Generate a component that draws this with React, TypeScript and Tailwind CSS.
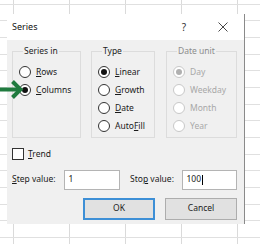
const font = { fontFamily: '"Segoe UI", "Noto Sans", "Open Sans", sans-serif' };

function Radio({ label, u, checked, disabled }: { label: string; u?: number; checked?: boolean; disabled?: boolean }) {
  const text =
    u === undefined ? (
      label
    ) : (
      <>
        {label.slice(0, u)}
        <span className="underline underline-offset-1">{label[u]}</span>
        {label.slice(u + 1)}
      </>
    );
  return (
    <div className="flex h-[18px] items-center gap-[5px]">
      <span
        className={
          "flex h-[12px] w-[12px] items-center justify-center rounded-full border bg-white " +
          (disabled ? "border-[#c8c8c8]" : "border-[#333333]")
        }
      >
        {checked && (
          <span className={"h-[6px] w-[6px] rounded-full " + (disabled ? "bg-[#b0b0b0]" : "bg-[#111111]")} />
        )}
      </span>
      <span className={disabled ? "text-[#a8a8a8]" : "text-[#1a1a1a]"}>{text}</span>
    </div>
  );
}

function Group({ title, width, dim, children }: { title: string; width: string; dim?: boolean; children: React.ReactNode }) {
  return (
    <fieldset className={"flex flex-col border border-[#dcdcdc] pl-[6px] pt-[7px] pb-[2px] " + width}>
      <legend className={"ml-[4px] px-[1px] leading-[10px] " + (dim ? "text-[#8c8c8c]" : "text-[#222222]")}>
        {title}
      </legend>
      {children}
    </fieldset>
  );
}

export default function App() {
  return (
    <div className="relative h-[244px] w-[260px] overflow-hidden bg-white text-[8.5px]" style={font}>
      {/* sheet grid behind the dialog */}
      <svg className="absolute inset-0" width="260" height="244">
        {[13, 69, 125, 181, 237].map((x) => (
          <line key={x} x1={x + 0.5} y1="0" x2={x + 0.5} y2="244" stroke="#dadada" />
        ))}
        {Array.from({ length: 15 }, (_, i) => 3.5 + i * 16.67).map((y) => (
          <line key={y} x1="0" y1={Math.round(y) + 0.5} x2="260" y2={Math.round(y) + 0.5} stroke="#e0e0e0" />
        ))}
      </svg>

      {/* dialog window */}
      <div className="absolute left-[7px] top-[14px] flex h-[210px] w-[238px] flex-col border-r border-[#8a8a8a]">
        <div className="flex h-[26px] items-center bg-white pl-[5px] text-[#111111]">
          <span className="text-[9px]">Series</span>
          <span className="ml-auto mr-[32px] text-[10px] text-[#333333]">?</span>
          <svg width="10" height="10" viewBox="0 0 10 10" className="mr-[16px]">
            <path d="M0.5 0.5 L9.5 9.5 M9.5 0.5 L0.5 9.5" stroke="#333333" strokeWidth="0.9" />
          </svg>
        </div>

        <div className="flex flex-1 flex-col bg-[#f0f0f0] pl-[5px] pr-[7px] pt-[6px]">
          <div className="flex">
            <Group title="Series in" width="w-[69px]">
              <Radio label="Rows" u={0} />
              <Radio label="Columns" u={0} checked />
            </Group>
            <div className="ml-[10px]">
              <Group title="Type" width="w-[64px]">
                <Radio label="Linear" u={0} checked />
                <Radio label="Growth" u={0} />
                <Radio label="Date" u={0} />
                <Radio label="AutoFill" u={4} />
              </Group>
            </div>
            <div className="ml-[11px]">
              <Group title="Date unit" width="w-[71px]" dim>
                <Radio label="Day" checked disabled />
                <Radio label="Weekday" disabled />
                <Radio label="Month" disabled />
                <Radio label="Year" disabled />
              </Group>
            </div>
          </div>

          <div className="mt-[10px] flex items-center gap-[4px] text-[#1a1a1a]">
            <span className="h-[12px] w-[12px] border border-[#333333] bg-white" />
            <span>
              <span className="underline underline-offset-1">T</span>rend
            </span>
          </div>

          <div className="mt-[9px] flex items-center text-[#1a1a1a]">
            <span className="w-[52px]">
              <span className="underline underline-offset-1">S</span>tep value:
            </span>
            <div className="flex h-[20px] w-[57px] items-center border border-[#b4b4b4] bg-white pl-[4px]">1</div>
            <span className="ml-[10px] w-[52px]">
              Sto<span className="underline underline-offset-1">p</span> value:
            </span>
            <div className="flex h-[20px] w-[56px] items-center border border-[#b4b4b4] bg-white pl-[4px]">
              100<span className="ml-[1px] h-[10px] w-px bg-black" />
            </div>
          </div>

          <div className="mt-[8px] flex justify-end gap-[10px] text-[#1a1a1a]">
            <button className="flex h-[22px] w-[72px] items-center justify-center border-2 border-[#3d8fd6] bg-[#e1e1e1]">
              OK
            </button>
            <button className="flex h-[22px] w-[72px] items-center justify-center border border-[#adadad] bg-[#e1e1e1]">
              Cancel
            </button>
          </div>
        </div>
      </div>

      {/* green pointer arrow */}
      <svg className="absolute left-0 top-[79px]" width="24" height="22" viewBox="0 0 24 22">
        <path d="M0 10.5 H19" stroke="#1f7a3e" strokeWidth="4" />
        <path d="M12.5 2.5 L20.5 10.5 L12.5 18.5" stroke="#1f7a3e" strokeWidth="4" fill="none" />
      </svg>
    </div>
  );
}
